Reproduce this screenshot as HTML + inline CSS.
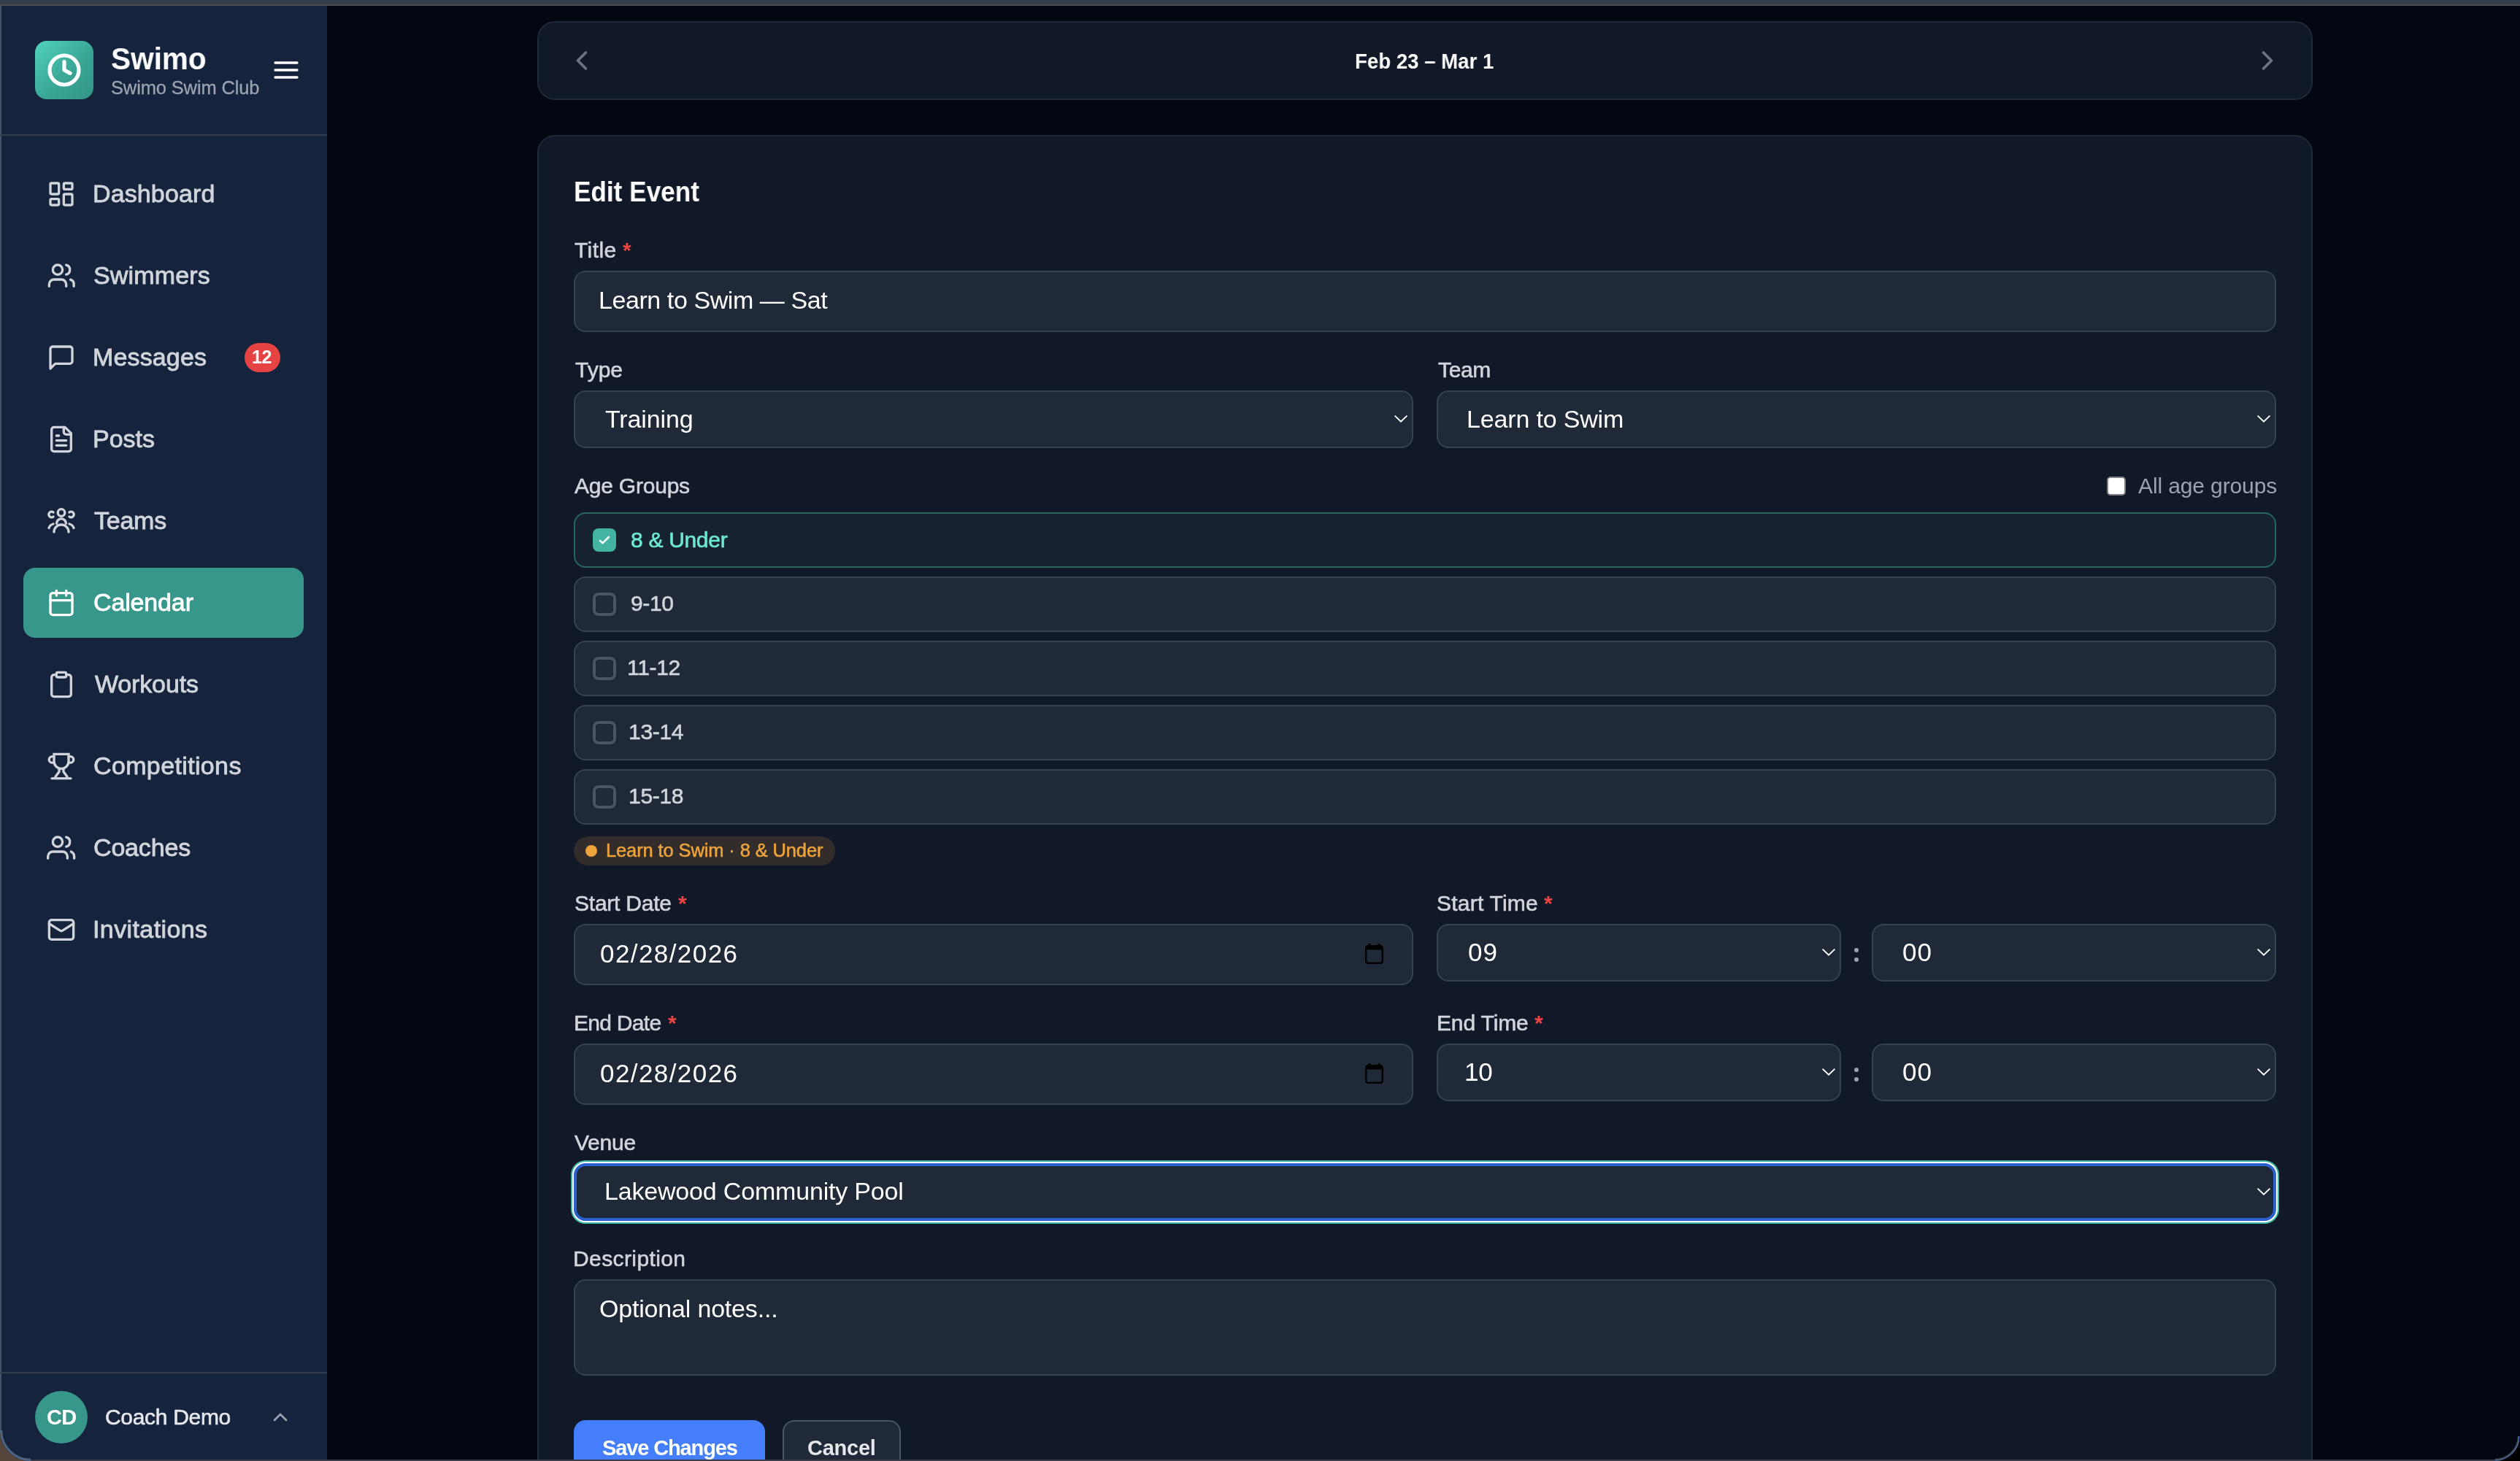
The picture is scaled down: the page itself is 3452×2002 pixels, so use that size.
<!DOCTYPE html>
<html><head><meta charset="utf-8"><style>
html,body{margin:0;padding:0;width:3452px;height:2002px;overflow:hidden;background:#030712;font-family:'Liberation Sans', sans-serif;}
.a{position:absolute;box-sizing:border-box;}
.t{position:absolute;white-space:nowrap;will-change:transform;}
@media (max-width: 2400px) { html { zoom: 0.5; } }
</style></head><body>
<div class="a" style="left:0px;top:0px;width:3452px;height:6px;background:#373c4d;"></div>
<div class="a" style="left:0px;top:6px;width:3452px;height:2px;background:#4a4c52;"></div>
<div class="a" style="left:0px;top:8px;width:448px;height:1992px;background:#15243c;"></div>
<div class="a" style="left:0px;top:8px;width:2px;height:1992px;background:#465164;"></div>
<div class="a" style="left:48px;top:56px;width:80px;height:80px;border-radius:16px;background:linear-gradient(135deg,#52d3be 0%,#3aa797 55%,#339487 100%)"></div>
<svg class="a" style="left:64px;top:72px;" width="48" height="48" viewBox="0 0 24 24" fill="none" stroke="#ffffff" stroke-width="2.6" stroke-linecap="round" stroke-linejoin="round"><circle cx="12" cy="12" r="10"/><polyline points="12 6.3 12 12 16 14.2"/></svg>
<div class="t" id="swimo" style="left:152.00px;top:52.40px;font-size:43px;line-height:56px;font-weight:700;color:#ffffff;letter-spacing:0.000px;transform:scaleX(0.9427);transform-origin:0 0;">Swimo</div>
<div class="t" id="club" style="left:152.00px;top:103.96px;font-size:25.5px;line-height:33px;font-weight:400;color:#9ca3af;letter-spacing:-0.143px;-webkit-text-stroke:0.3px #9ca3af;">Swimo Swim Club</div>
<svg class="a" style="left:372px;top:76px;" width="40" height="40" viewBox="0 0 24 24" fill="none" stroke="#ffffff" stroke-width="2" stroke-linecap="round" stroke-linejoin="round"><line x1="3" y1="6" x2="21" y2="6"/><line x1="3" y1="12" x2="21" y2="12"/><line x1="3" y1="18" x2="21" y2="18"/></svg>
<div class="a" style="left:0px;top:184px;width:448px;height:2px;background:#323e50;"></div>
<svg class="a" style="left:64px;top:246px;" width="40" height="40" viewBox="0 0 24 24" fill="none" stroke="#d1d5db" stroke-width="2" stroke-linecap="round" stroke-linejoin="round"><rect width="7" height="9" x="3" y="3" rx="1"/><rect width="7" height="5" x="14" y="3" rx="1"/><rect width="7" height="9" x="14" y="12" rx="1"/><rect width="7" height="5" x="3" y="16" rx="1"/></svg>
<div class="t" id="nav_Dashboard" style="left:127.00px;top:243.22px;font-size:34px;line-height:44px;font-weight:400;color:#d1d5db;letter-spacing:0.120px;-webkit-text-stroke:0.85px #d1d5db;">Dashboard</div>
<svg class="a" style="left:64px;top:358px;" width="40" height="40" viewBox="0 0 24 24" fill="none" stroke="#d1d5db" stroke-width="2" stroke-linecap="round" stroke-linejoin="round"><path d="M16 20.6v-1.6a4 4 0 0 0-4-4H6a4 4 0 0 0-4 4v1.6"/><circle cx="9" cy="7" r="4"/><path d="M22.3 20.6v-1.6a4 4 0 0 0-2.8-3.9"/><path d="M16 3.13a4 4 0 0 1 0 7.75"/></svg>
<div class="t" id="nav_Swimmers" style="left:128.00px;top:355.22px;font-size:34px;line-height:44px;font-weight:400;color:#d1d5db;letter-spacing:0.145px;-webkit-text-stroke:0.85px #d1d5db;">Swimmers</div>
<svg class="a" style="left:64px;top:470px;" width="40" height="40" viewBox="0 0 24 24" fill="none" stroke="#d1d5db" stroke-width="2" stroke-linecap="round" stroke-linejoin="round"><path d="M21 15a2 2 0 0 1-2 2H7l-4 4V5a2 2 0 0 1 2-2h14a2 2 0 0 1 2 2z"/></svg>
<div class="t" id="nav_Messages" style="left:127.00px;top:467.22px;font-size:34px;line-height:44px;font-weight:400;color:#d1d5db;letter-spacing:0.145px;-webkit-text-stroke:0.85px #d1d5db;">Messages</div>
<svg class="a" style="left:64px;top:582px;" width="40" height="40" viewBox="0 0 24 24" fill="none" stroke="#d1d5db" stroke-width="2" stroke-linecap="round" stroke-linejoin="round"><path d="M15 2H6a2 2 0 0 0-2 2v16a2 2 0 0 0 2 2h12a2 2 0 0 0 2-2V7Z"/><path d="M14 2v4a2 2 0 0 0 2 2h4"/><path d="M10 9H8"/><path d="M16 13H8"/><path d="M16 17H8"/></svg>
<div class="t" id="nav_Posts" style="left:127.00px;top:579.22px;font-size:34px;line-height:44px;font-weight:400;color:#d1d5db;letter-spacing:0.000px;-webkit-text-stroke:0.85px #d1d5db;">Posts</div>
<svg class="a" style="left:64px;top:694px;" width="40" height="40" viewBox="0 0 24 24" fill="none" stroke="#d1d5db" stroke-width="2" stroke-linecap="round" stroke-linejoin="round"><circle cx="12" cy="5.1" r="2.9"/><path d="M8.16 13.98a3.84 3.84 0 0 1 7.68 0"/><path d="M6 21a6 6 0 0 1 12 0"/><path d="M5.43 4.85a2.28 2.28 0 1 0 0 3.5"/><path d="M18.57 4.85a2.28 2.28 0 1 1 0 3.5"/><path d="M1.8 17.7a5 5 0 0 1 3.6-3.3"/><path d="M22.2 17.7a5 5 0 0 0-3.6-3.3"/></svg>
<div class="t" id="nav_Teams" style="left:129.00px;top:691.22px;font-size:34px;line-height:44px;font-weight:400;color:#d1d5db;letter-spacing:-0.250px;-webkit-text-stroke:0.85px #d1d5db;">Teams</div>
<div class="a" style="left:32px;top:778px;width:384px;height:96px;background:#38978b;border-radius:16px;"></div>
<svg class="a" style="left:64px;top:806px;" width="40" height="40" viewBox="0 0 24 24" fill="none" stroke="#ffffff" stroke-width="2" stroke-linecap="round" stroke-linejoin="round"><path d="M8 2v4"/><path d="M16 2v4"/><rect width="18" height="18" x="3" y="4" rx="2"/><path d="M3 10h18"/></svg>
<div class="t" id="nav_Calendar" style="left:128.00px;top:803.22px;font-size:34px;line-height:44px;font-weight:400;color:#ffffff;letter-spacing:-0.146px;-webkit-text-stroke:0.85px #ffffff;">Calendar</div>
<svg class="a" style="left:64px;top:918px;" width="40" height="40" viewBox="0 0 24 24" fill="none" stroke="#d1d5db" stroke-width="2" stroke-linecap="round" stroke-linejoin="round"><rect width="8" height="4" x="8" y="2" rx="1" ry="1"/><path d="M16 4h2a2 2 0 0 1 2 2v14a2 2 0 0 1-2 2H6a2 2 0 0 1-2-2V6a2 2 0 0 1 2-2h2"/></svg>
<div class="t" id="nav_Workouts" style="left:130.00px;top:915.22px;font-size:34px;line-height:44px;font-weight:400;color:#d1d5db;letter-spacing:-0.146px;-webkit-text-stroke:0.85px #d1d5db;">Workouts</div>
<svg class="a" style="left:64px;top:1030px;" width="40" height="40" viewBox="0 0 24 24" fill="none" stroke="#d1d5db" stroke-width="2" stroke-linecap="round" stroke-linejoin="round"><path d="M6 2H18V8A6 6 0 0 1 6 8Z" stroke-linejoin="miter"/><path d="M6 4H4.5A2.55 2.55 0 0 0 4.5 9.1H6"/><path d="M18 4H19.5A2.55 2.55 0 0 1 19.5 9.1H18"/><path d="M10.2 14V16.5L7.2 20.5V21.5"/><path d="M13.8 14V16.5L16.8 20.5V21.5"/><path d="M4.25 22H19.75"/></svg>
<div class="t" id="nav_Competitions" style="left:128.00px;top:1027.22px;font-size:34px;line-height:44px;font-weight:400;color:#d1d5db;letter-spacing:0.361px;-webkit-text-stroke:0.85px #d1d5db;">Competitions</div>
<svg class="a" style="left:64px;top:1142px;" width="40" height="40" viewBox="0 0 24 24" fill="none" stroke="#d1d5db" stroke-width="2" stroke-linecap="round" stroke-linejoin="round"><path d="M1 20.5v-1.5a4 4 0 0 1 4-4h8a4 4 0 0 1 4 4v1.5"/><circle cx="9" cy="7" r="4"/><path d="M20 15a4.5 4.5 0 0 1 2.6 4v1.5"/><path d="M16 3.13a4 4 0 0 1 0 7.75"/></svg>
<div class="t" id="nav_Coaches" style="left:128.00px;top:1139.22px;font-size:34px;line-height:44px;font-weight:400;color:#d1d5db;letter-spacing:-0.169px;-webkit-text-stroke:0.85px #d1d5db;">Coaches</div>
<svg class="a" style="left:64px;top:1254px;" width="40" height="40" viewBox="0 0 24 24" fill="none" stroke="#d1d5db" stroke-width="2" stroke-linecap="round" stroke-linejoin="round"><rect width="20" height="16" x="2" y="4" rx="2"/><path d="m22 7-8.97 5.7a1.94 1.94 0 0 1-2.06 0L2 7"/></svg>
<div class="t" id="nav_Invitations" style="left:127.00px;top:1251.22px;font-size:34px;line-height:44px;font-weight:400;color:#d1d5db;letter-spacing:0.400px;-webkit-text-stroke:0.85px #d1d5db;">Invitations</div>
<div class="a" style="left:335px;top:470px;width:49px;height:40px;background:#e64442;border-radius:20px;"></div>
<div class="t" id="badge12" style="left:345.00px;top:473.34px;font-size:25px;line-height:32px;font-weight:700;color:#ffffff;letter-spacing:-0.500px;">12</div>
<div class="a" style="left:0px;top:1880px;width:448px;height:2px;background:#323e50;"></div>
<div class="a" style="left:48px;top:1906px;width:72px;height:72px;background:#38978b;border-radius:36px;"></div>
<div class="t" id="cd" style="left:63.50px;top:1922.95px;font-size:29px;line-height:38px;font-weight:700;color:#ffffff;letter-spacing:-0.800px;">CD</div>
<div class="t" id="coach" style="left:144.00px;top:1921.61px;font-size:30px;line-height:39px;font-weight:400;color:#e5e7eb;letter-spacing:-0.309px;-webkit-text-stroke:0.6px #e5e7eb;">Coach Demo</div>
<svg class="a" style="left:368px;top:1926px;" width="32" height="32" viewBox="0 0 24 24" fill="none" stroke="#9ca3af" stroke-width="2" stroke-linecap="round" stroke-linejoin="round"><path d="m18 15-6-6-6 6"/></svg>
<div class="a" style="left:736px;top:29px;width:2432px;height:108px;background:#111827;border:2px solid #1f2937;border-radius:24px;box-sizing:border-box;"></div>
<svg class="a" style="left:775px;top:61px;" width="44" height="44" viewBox="0 0 24 24" fill="none" stroke="#6b7280" stroke-width="2" stroke-linecap="round" stroke-linejoin="round"><path d="m15 18-6-6 6-6"/></svg>
<svg class="a" style="left:3084px;top:61px;" width="44" height="44" viewBox="0 0 24 24" fill="none" stroke="#6b7280" stroke-width="2" stroke-linecap="round" stroke-linejoin="round"><path d="m9 18 6-6-6-6"/></svg>
<div class="t" id="date" style="left:1856.00px;top:64.88px;font-size:29.5px;line-height:38px;font-weight:700;color:#ffffff;letter-spacing:0.000px;transform:scaleX(0.9358);transform-origin:0 0;">Feb 23 – Mar 1</div>
<div class="a" style="left:736px;top:185px;width:2432px;height:1875px;background:#111827;border:2px solid #1f2937;border-radius:24px;box-sizing:border-box;"></div>
<div class="t" id="edit" style="left:785.50px;top:239.13px;font-size:38px;line-height:49px;font-weight:700;color:#ffffff;letter-spacing:0.000px;transform:scaleX(0.9250);transform-origin:0 0;">Edit Event</div>
<div class="t" id="l_title" style="left:787.00px;top:322.71px;font-size:30px;line-height:39px;font-weight:400;color:#d1d5db;letter-spacing:0.400px;-webkit-text-stroke:0.6px #d1d5db;">Title</div>
<div class="t" id="l_title_star" style="left:853.00px;top:323.21px;font-size:30px;line-height:39px;font-weight:700;color:#ef4444;letter-spacing:0.000px;">*</div>
<div class="a" style="left:786px;top:371px;width:2332px;height:84px;background:#1f2937;border:2px solid #374151;border-radius:16px;box-sizing:border-box;"></div>
<div class="t" id="v_title" style="left:819.50px;top:389.02px;font-size:34px;line-height:44px;font-weight:400;color:#ffffff;letter-spacing:-0.423px;">Learn to Swim — Sat</div>
<div class="t" id="l_type" style="left:787.50px;top:487.11px;font-size:30px;line-height:39px;font-weight:400;color:#d1d5db;letter-spacing:0.002px;-webkit-text-stroke:0.6px #d1d5db;">Type</div>
<div class="a" style="left:786px;top:535px;width:1150px;height:79px;background:#1f2937;border:2px solid #374151;border-radius:16px;box-sizing:border-box;"></div>
<div class="t" id="v_type" style="left:828.50px;top:552.22px;font-size:34px;line-height:44px;font-weight:400;color:#ffffff;letter-spacing:-0.143px;">Training</div>
<svg class="a" style="left:1909px;top:567.2px" width="20" height="14" viewBox="0 0 20 14" fill="none" stroke="#ffffff" stroke-width="1.9" stroke-linecap="butt" stroke-linejoin="miter"><path d="M1.6 2.6 L10 10.6 L18.4 2.6"/></svg>
<div class="t" id="l_team" style="left:1969.50px;top:487.11px;font-size:30px;line-height:39px;font-weight:400;color:#d1d5db;letter-spacing:-0.335px;-webkit-text-stroke:0.6px #d1d5db;">Team</div>
<div class="a" style="left:1968px;top:535px;width:1150px;height:79px;background:#1f2937;border:2px solid #374151;border-radius:16px;box-sizing:border-box;"></div>
<div class="t" id="v_team" style="left:2009.40px;top:552.22px;font-size:34px;line-height:44px;font-weight:400;color:#ffffff;letter-spacing:-0.167px;">Learn to Swim</div>
<svg class="a" style="left:3091px;top:567.2px" width="20" height="14" viewBox="0 0 20 14" fill="none" stroke="#ffffff" stroke-width="1.9" stroke-linecap="butt" stroke-linejoin="miter"><path d="M1.6 2.6 L10 10.6 L18.4 2.6"/></svg>
<div class="t" id="l_age" style="left:786.50px;top:646.11px;font-size:30px;line-height:39px;font-weight:400;color:#d1d5db;letter-spacing:-0.221px;-webkit-text-stroke:0.6px #d1d5db;">Age Groups</div>
<div class="a" style="left:2886px;top:653px;width:26px;height:26px;background:#ffffff;border:2px solid #7f7f7f;border-radius:5px;box-sizing:border-box;"></div>
<div class="t" id="allage" style="left:2928.50px;top:646.31px;font-size:30px;line-height:39px;font-weight:400;color:#9ca3af;letter-spacing:-0.119px;">All age groups</div>
<div class="a" style="left:786px;top:702px;width:2332px;height:76px;background:#16232e;border:2px solid #27665f;border-radius:16px;box-sizing:border-box;"></div>
<div class="a" style="left:812px;top:724px;width:32px;height:32px;background:#43b4a4;border-radius:8px;"></div>
<svg class="a" style="left:812px;top:724px" width="32" height="32" viewBox="0 0 32 32" fill="none" stroke="#ffffff" stroke-width="2.6" stroke-linecap="round" stroke-linejoin="round"><path d="M10 16.9L13.5 20.2L21.8 12"/></svg>
<div class="t" id="row0" style="left:863.50px;top:720.21px;font-size:30px;line-height:39px;font-weight:400;color:#6ee7d3;letter-spacing:-0.307px;-webkit-text-stroke:0.6px #6ee7d3;">8 &amp; Under</div>
<div class="a" style="left:786px;top:790px;width:2332px;height:76px;background:#1f2937;border:2px solid #374151;border-radius:16px;box-sizing:border-box;"></div>
<div class="a" style="left:812px;top:812px;width:32px;height:32px;background:#1f2937;border:4px solid #4b5563;border-radius:8px;box-sizing:border-box;"></div>
<div class="t" id="row1" style="left:863.50px;top:807.21px;font-size:30px;line-height:39px;font-weight:400;color:#d1d5db;letter-spacing:-0.332px;-webkit-text-stroke:0.6px #d1d5db;">9-10</div>
<div class="a" style="left:786px;top:878px;width:2332px;height:76px;background:#1f2937;border:2px solid #374151;border-radius:16px;box-sizing:border-box;"></div>
<div class="a" style="left:812px;top:900px;width:32px;height:32px;background:#1f2937;border:4px solid #4b5563;border-radius:8px;box-sizing:border-box;"></div>
<div class="t" id="row2" style="left:858.90px;top:895.21px;font-size:30px;line-height:39px;font-weight:400;color:#d1d5db;letter-spacing:-0.300px;-webkit-text-stroke:0.6px #d1d5db;">11-12</div>
<div class="a" style="left:786px;top:966px;width:2332px;height:76px;background:#1f2937;border:2px solid #374151;border-radius:16px;box-sizing:border-box;"></div>
<div class="a" style="left:812px;top:988px;width:32px;height:32px;background:#1f2937;border:4px solid #4b5563;border-radius:8px;box-sizing:border-box;"></div>
<div class="t" id="row3" style="left:861.10px;top:983.21px;font-size:30px;line-height:39px;font-weight:400;color:#d1d5db;letter-spacing:-0.300px;-webkit-text-stroke:0.6px #d1d5db;">13-14</div>
<div class="a" style="left:786px;top:1054px;width:2332px;height:76px;background:#1f2937;border:2px solid #374151;border-radius:16px;box-sizing:border-box;"></div>
<div class="a" style="left:812px;top:1076px;width:32px;height:32px;background:#1f2937;border:4px solid #4b5563;border-radius:8px;box-sizing:border-box;"></div>
<div class="t" id="row4" style="left:860.70px;top:1071.20px;font-size:30px;line-height:39px;font-weight:400;color:#d1d5db;letter-spacing:-0.300px;-webkit-text-stroke:0.6px #d1d5db;">15-18</div>
<div class="a" style="left:786px;top:1146px;width:358px;height:40px;background:#322c2a;border-radius:20px;"></div>
<div class="a" style="left:802px;top:1158px;width:16px;height:16px;background:#eea43c;border-radius:8px;"></div>
<div class="t" id="pill" style="left:829.50px;top:1148.96px;font-size:25.5px;line-height:33px;font-weight:400;color:#eea43c;letter-spacing:-0.125px;-webkit-text-stroke:0.5px #eea43c;">Learn to Swim · 8 &amp; Under</div>
<div class="t" id="l_sd" style="left:786.50px;top:1218.20px;font-size:30px;line-height:39px;font-weight:400;color:#d1d5db;letter-spacing:-0.225px;-webkit-text-stroke:0.6px #d1d5db;">Start Date</div>
<div class="t" id="l_st" style="left:1968.00px;top:1218.31px;font-size:30px;line-height:39px;font-weight:400;color:#d1d5db;letter-spacing:0.222px;-webkit-text-stroke:0.6px #d1d5db;">Start Time</div>
<div class="a" style="left:786px;top:1266px;width:1150px;height:84px;background:#1f2937;border:2px solid #374151;border-radius:16px;box-sizing:border-box;"></div>
<div class="t" id="v_sd" style="left:822.00px;top:1283.87px;font-size:35px;line-height:46px;font-weight:400;color:#ffffff;letter-spacing:1.426px;">02/28/2026</div>
<svg class="a" style="left:1869.5px;top:1293px" width="25" height="28" viewBox="0 0 25 28"><rect x="1.2" y="3.2" width="22.6" height="23.6" rx="3" fill="none" stroke="#000" stroke-width="2.4"/><rect x="1.2" y="3.2" width="22.6" height="5.2" fill="#000"/><rect x="4.5" y="0" width="3" height="4" fill="#000"/><rect x="17.5" y="0" width="3" height="4" fill="#000"/></svg>
<div class="a" style="left:1968px;top:1266px;width:554px;height:79px;background:#1f2937;border:2px solid #374151;border-radius:16px;box-sizing:border-box;"></div>
<div class="t" id="v_sh" style="left:2010.50px;top:1281.87px;font-size:35px;line-height:46px;font-weight:400;color:#ffffff;letter-spacing:1.000px;">09</div>
<svg class="a" style="left:2495px;top:1298.2px" width="20" height="14" viewBox="0 0 20 14" fill="none" stroke="#ffffff" stroke-width="1.9" stroke-linecap="butt" stroke-linejoin="miter"><path d="M1.6 2.6 L10 10.6 L18.4 2.6"/></svg>
<div class="a" style="left:2564px;top:1266px;width:554px;height:79px;background:#1f2937;border:2px solid #374151;border-radius:16px;box-sizing:border-box;"></div>
<div class="t" id="v_sm" style="left:2605.50px;top:1281.87px;font-size:35px;line-height:46px;font-weight:400;color:#ffffff;letter-spacing:1.000px;">00</div>
<svg class="a" style="left:3091px;top:1298.2px" width="20" height="14" viewBox="0 0 20 14" fill="none" stroke="#ffffff" stroke-width="1.9" stroke-linecap="butt" stroke-linejoin="miter"><path d="M1.6 2.6 L10 10.6 L18.4 2.6"/></svg>
<div class="t" id="l_ed" style="left:785.50px;top:1382.11px;font-size:30px;line-height:39px;font-weight:400;color:#d1d5db;letter-spacing:-0.711px;-webkit-text-stroke:0.6px #d1d5db;">End Date</div>
<div class="t" id="l_et" style="left:1967.50px;top:1382.40px;font-size:30px;line-height:39px;font-weight:400;color:#d1d5db;letter-spacing:-0.144px;-webkit-text-stroke:0.6px #d1d5db;">End Time</div>
<div class="a" style="left:786px;top:1430px;width:1150px;height:84px;background:#1f2937;border:2px solid #374151;border-radius:16px;box-sizing:border-box;"></div>
<div class="t" id="v_ed" style="left:822.00px;top:1447.87px;font-size:35px;line-height:46px;font-weight:400;color:#ffffff;letter-spacing:1.426px;">02/28/2026</div>
<svg class="a" style="left:1869.5px;top:1457px" width="25" height="28" viewBox="0 0 25 28"><rect x="1.2" y="3.2" width="22.6" height="23.6" rx="3" fill="none" stroke="#000" stroke-width="2.4"/><rect x="1.2" y="3.2" width="22.6" height="5.2" fill="#000"/><rect x="4.5" y="0" width="3" height="4" fill="#000"/><rect x="17.5" y="0" width="3" height="4" fill="#000"/></svg>
<div class="a" style="left:1968px;top:1430px;width:554px;height:79px;background:#1f2937;border:2px solid #374151;border-radius:16px;box-sizing:border-box;"></div>
<div class="t" id="v_eh" style="left:2006.00px;top:1445.97px;font-size:35px;line-height:46px;font-weight:400;color:#ffffff;letter-spacing:-0.300px;">10</div>
<svg class="a" style="left:2495px;top:1462.2px" width="20" height="14" viewBox="0 0 20 14" fill="none" stroke="#ffffff" stroke-width="1.9" stroke-linecap="butt" stroke-linejoin="miter"><path d="M1.6 2.6 L10 10.6 L18.4 2.6"/></svg>
<div class="a" style="left:2564px;top:1430px;width:554px;height:79px;background:#1f2937;border:2px solid #374151;border-radius:16px;box-sizing:border-box;"></div>
<div class="t" id="v_em" style="left:2605.50px;top:1445.87px;font-size:35px;line-height:46px;font-weight:400;color:#ffffff;letter-spacing:1.000px;">00</div>
<svg class="a" style="left:3091px;top:1462.2px" width="20" height="14" viewBox="0 0 20 14" fill="none" stroke="#ffffff" stroke-width="1.9" stroke-linecap="butt" stroke-linejoin="miter"><path d="M1.6 2.6 L10 10.6 L18.4 2.6"/></svg>
<div class="a" style="left:2540px;top:1299.4px;width:6px;height:6.0px;background:#9ca3af;border-radius:3px;"></div>
<div class="a" style="left:2540px;top:1311.8px;width:6px;height:6.0px;background:#9ca3af;border-radius:3px;"></div>
<div class="a" style="left:2540px;top:1463.4px;width:6px;height:6.0px;background:#9ca3af;border-radius:3px;"></div>
<div class="a" style="left:2540px;top:1475.8px;width:6px;height:6.0px;background:#9ca3af;border-radius:3px;"></div>
<div class="t" id="l_venue" style="left:787.00px;top:1546.11px;font-size:30px;line-height:39px;font-weight:400;color:#d1d5db;letter-spacing:-0.250px;-webkit-text-stroke:0.6px #d1d5db;">Venue</div>
<div class="a" style="left:782px;top:1590px;width:2340px;height:87px;background:#3fb7a5;border-radius:20px;"></div>
<div class="a" style="left:784px;top:1592px;width:2336px;height:83px;background:#ffffff;border-radius:18px;"></div>
<div class="a" style="left:786px;top:1594px;width:2332px;height:79px;background:#1f2937;border:4px solid #2a5fcf;border-radius:16px;box-sizing:border-box;"></div>
<div class="t" id="v_venue" style="left:828.00px;top:1610.42px;font-size:34px;line-height:44px;font-weight:400;color:#ffffff;letter-spacing:-0.182px;">Lakewood Community Pool</div>
<svg class="a" style="left:3091px;top:1626px" width="20" height="14" viewBox="0 0 20 14" fill="none" stroke="#ffffff" stroke-width="1.9" stroke-linecap="butt" stroke-linejoin="miter"><path d="M1.6 2.6 L10 10.6 L18.4 2.6"/></svg>
<div class="t" id="l_desc" style="left:785.00px;top:1704.51px;font-size:30px;line-height:39px;font-weight:400;color:#d1d5db;letter-spacing:0.400px;-webkit-text-stroke:0.6px #d1d5db;">Description</div>
<div class="a" style="left:786px;top:1753px;width:2332px;height:132px;background:#1f2937;border:2px solid #374151;border-radius:16px;box-sizing:border-box;"></div>
<div class="t" id="v_desc" style="left:820.50px;top:1771.32px;font-size:34px;line-height:44px;font-weight:400;color:#ffffff;letter-spacing:-0.186px;">Optional notes...</div>
<div class="a" style="left:786px;top:1946px;width:262px;height:84px;background:#447efb;border-radius:16px;"></div>
<div class="t" id="save" style="left:824.50px;top:1964.95px;font-size:29px;line-height:38px;font-weight:700;color:#ffffff;letter-spacing:-1.127px;">Save Changes</div>
<div class="a" style="left:1072px;top:1946px;width:162px;height:84px;background:#1f2937;border:2px solid #4b5563;border-radius:16px;box-sizing:border-box;"></div>
<div class="t" id="cancel" style="left:1106.00px;top:1964.95px;font-size:29px;line-height:38px;font-weight:700;color:#e5e7eb;letter-spacing:-0.240px;">Cancel</div>
<div class="t" id="s_sd" style="left:929.10px;top:1218.20px;font-size:30px;line-height:39px;font-weight:700;color:#ef4444;letter-spacing:0.000px;">*</div>
<div class="t" id="s_st" style="left:2114.90px;top:1218.31px;font-size:30px;line-height:39px;font-weight:700;color:#ef4444;letter-spacing:0.000px;">*</div>
<div class="t" id="s_ed" style="left:915.00px;top:1382.11px;font-size:30px;line-height:39px;font-weight:700;color:#ef4444;letter-spacing:0.000px;">*</div>
<div class="t" id="s_et" style="left:2101.90px;top:1382.40px;font-size:30px;line-height:39px;font-weight:700;color:#ef4444;letter-spacing:0.000px;">*</div>
<div class="a" style="left:0px;top:2000px;width:3452px;height:2px;background:#3a3f4b;"></div>
<svg class="a" style="left:0px;top:1952px" width="50" height="50" viewBox="0 0 50 50"><path d="M0 0 V8 A42 42 0 0 0 42 50 H0 Z" fill="#54443a"/><path d="M1.2 8 A40.8 40.8 0 0 0 42 48.8" fill="none" stroke="#4a6fa3" stroke-width="1.6"/><path d="M2.6 8 A39.4 39.4 0 0 0 42 47.4" fill="none" stroke="#5c6678" stroke-width="1.2"/></svg>
<svg class="a" style="left:3412px;top:1962px" width="40" height="40" viewBox="0 0 40 40"><path d="M40 6 A34 34 0 0 1 6 40 H40 Z" fill="#000"/><path d="M38.8 6 A32.8 32.8 0 0 1 6 38.8" fill="none" stroke="#4a6fa3" stroke-width="1.6"/><path d="M37.4 6 A31.4 31.4 0 0 1 6 37.4" fill="none" stroke="#4b4f5a" stroke-width="1.2"/></svg>
</body></html>
